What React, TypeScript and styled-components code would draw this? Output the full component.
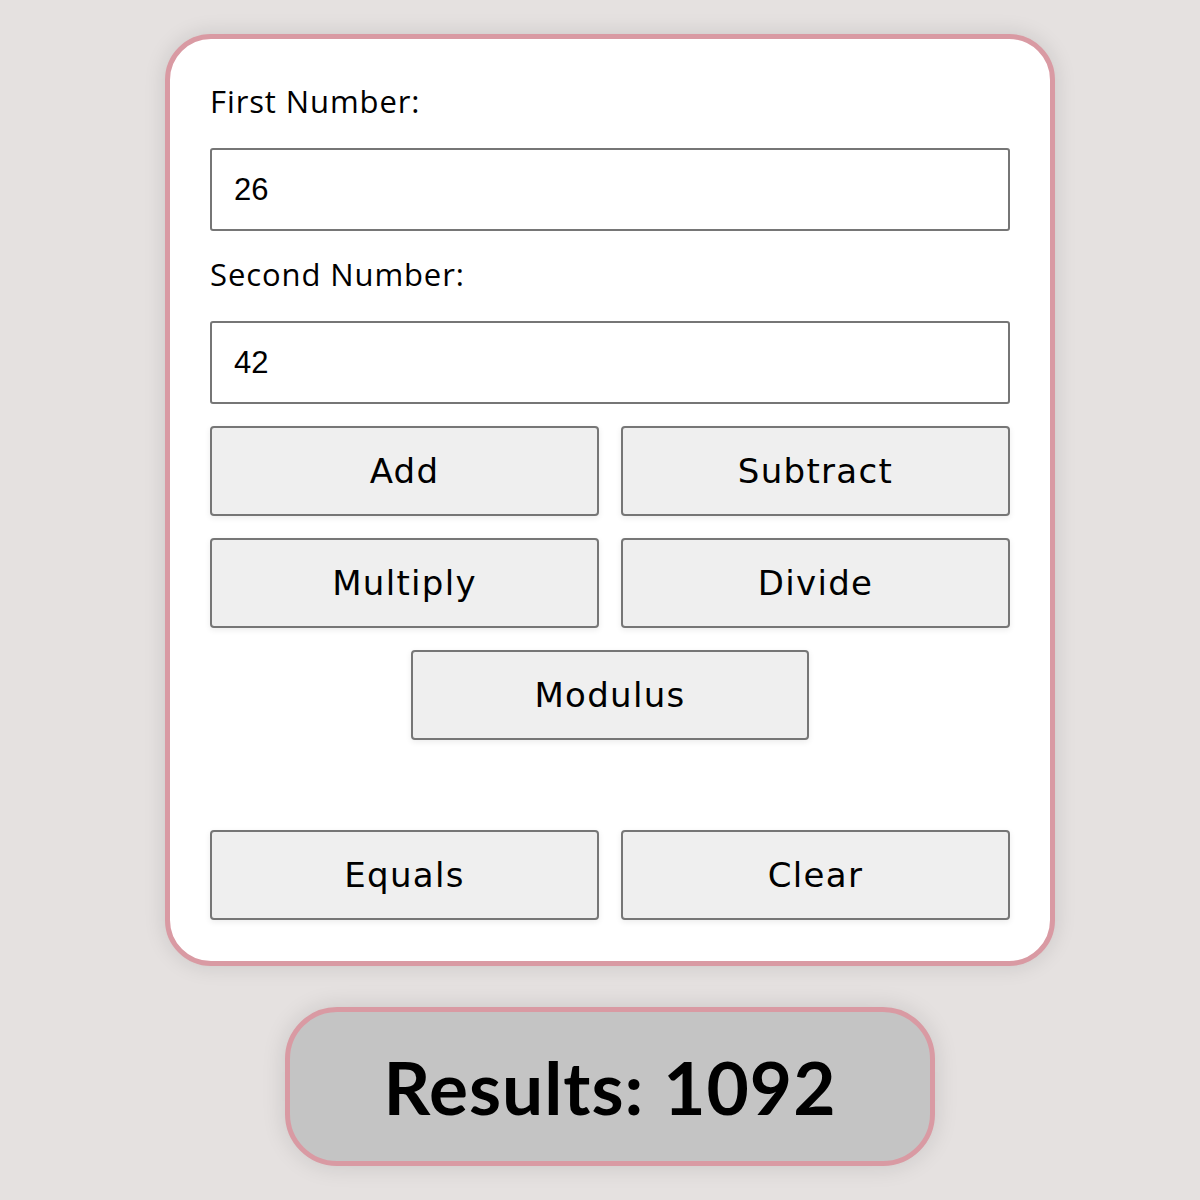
import React, { useState } from "react";
import styled, { createGlobalStyle } from "styled-components";

const GlobalStyle = createGlobalStyle`
  html, body {
    margin: 0;
    padding: 0;
    background: #e5e1e0;
  }
  * { box-sizing: border-box; }
`;

const Page = styled.div`
  display: flex;
  flex-direction: column;
  align-items: center;
  padding-top: 34px;
  padding-left: 20px;
  gap: 41px;
  min-height: 1200px;
`;

const Card = styled.div`
  width: 890px;
  background: #ffffff;
  border: 5px solid #d99aa3;
  border-radius: 46px;
  padding: 40px 40px 41px;
  box-shadow: 0 0 22px rgba(0, 0, 0, 0.12);
  display: flex;
  flex-direction: column;
`;

const Label = styled.label<{ $top?: number }>`
  display: block;
  font-family: "Open Sans", "Noto Sans", sans-serif;
  font-size: 31px;
  line-height: 45px;
  color: #000;
  margin-top: ${(p) => p.$top ?? 0}px;
  margin-bottom: 24px;
  letter-spacing: 0.9px;
`;

const Input = styled.input`
  width: 800px;
  height: 83px;
  border: 2px solid #767676;
  border-radius: 3px;
  padding: 0 22px;
  font-family: "Liberation Sans", Arial, sans-serif;
  font-size: 31px;
  color: #000;
  background: #fff;
  outline: none;
`;

const ButtonGrid = styled.div<{ $top: number }>`
  display: grid;
  grid-template-columns: 389px 389px;
  column-gap: 22px;
  row-gap: 22px;
  margin-top: ${(p) => p.$top}px;
`;

const Centered = styled.div`
  display: flex;
  justify-content: center;
  margin-top: 22px;
`;

const OpButton = styled.button<{ $w?: number }>`
  width: ${(p) => (p.$w ? `${p.$w}px` : "100%")};
  height: 90px;
  background: #efefef;
  border: 2px solid #767676;
  border-radius: 4px;
  font-family: "DejaVu Sans", "Liberation Sans", sans-serif;
  font-size: 34px;
  letter-spacing: 1.3px;
  color: #000;
  box-shadow: 0 2px 6px rgba(0, 0, 0, 0.08);
  cursor: pointer;
  padding: 0;
`;

const Results = styled.div`
  width: 650px;
  height: 159px;
  background: #c4c4c4;
  border: 5px solid #d99aa3;
  border-radius: 52px;
  box-shadow: 0 0 24px rgba(0, 0, 0, 0.12);
  display: flex;
  align-items: center;
  justify-content: center;
  font-family: "Lato", "Noto Sans", sans-serif;
  font-weight: 700;
  font-size: 73px;
  color: #000;
  letter-spacing: 1px;
`;

export default function App() {
  const [a, setA] = useState("26");
  const [b, setB] = useState("42");
  const [result] = useState("1092");

  return (
    <>
      <GlobalStyle />
      <Page>
        <Card>
          <Label htmlFor="first">First Number:</Label>
          <Input id="first" value={a} onChange={(e) => setA(e.target.value)} />
          <Label htmlFor="second" $top={21}>
            Second Number:
          </Label>
          <Input id="second" value={b} onChange={(e) => setB(e.target.value)} />
          <ButtonGrid $top={22}>
            <OpButton>Add</OpButton>
            <OpButton>Subtract</OpButton>
            <OpButton>Multiply</OpButton>
            <OpButton>Divide</OpButton>
          </ButtonGrid>
          <Centered>
            <OpButton $w={398}>Modulus</OpButton>
          </Centered>
          <ButtonGrid $top={90}>
            <OpButton>Equals</OpButton>
            <OpButton>Clear</OpButton>
          </ButtonGrid>
        </Card>
        <Results>Results: {result}</Results>
      </Page>
    </>
  );
}
